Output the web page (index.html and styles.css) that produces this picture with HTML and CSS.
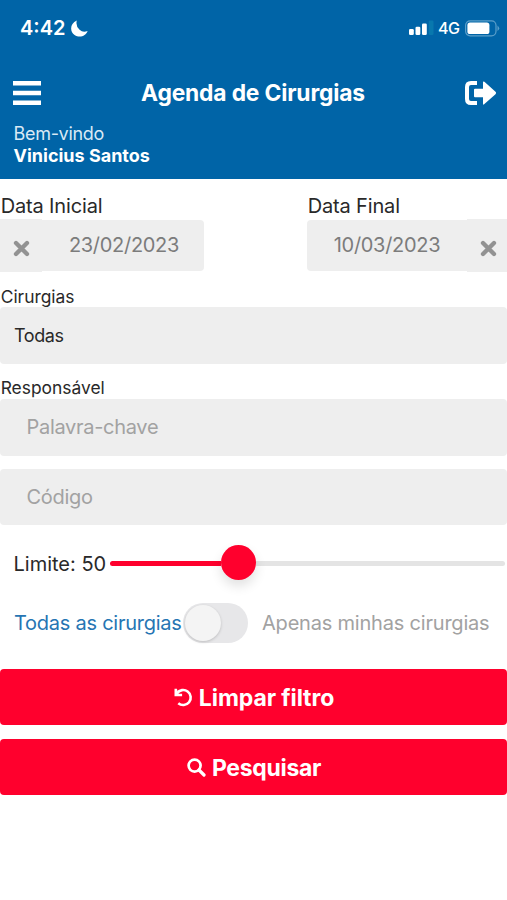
FILE: index.html
```html
<!DOCTYPE html>
<html lang="pt-BR">
<head>
<meta charset="utf-8">
<title>Agenda de Cirurgias</title>
<link rel="stylesheet" href="styles.css">
</head>
<body>
<header class="header">
  <div class="status">
    <span class="clock">4:42</span>
    <svg class="moon" width="17" height="17" viewBox="0 0 17 17"><path d="M5.800.5C-1.200 3.400-1.400 11.600 3.600 14.900 8.300 18 15 16.200 16.600 10.900Q12 12.800 8.600 9.800 4.400 6 5.800.5Z" fill="#fff"/></svg>
    <svg class="signal" width="25" height="16" viewBox="0 0 25 16"><g fill="#fff"><rect x="0" y="9" width="4.800" height="6" rx="1.300"/><rect x="6.500" y="6.700" width="4.800" height="8.300" rx="1.300"/><rect x="13" y="3.400" width="4.800" height="11.600" rx="1.300"/></g><rect x="19.700" y="0.500" width="4.800" height="14.500" rx="1.300" fill="#0878ae"/></svg>
    <span class="network">4G</span>
    <svg class="battery" width="35" height="17" viewBox="0 0 35 17"><rect x=".6" y=".8" width="30.400" height="15" rx="4.500" fill="none" stroke="#5b9fca" stroke-width="1.200"/><rect x="2.400" y="2.600" width="22" height="11.400" rx="2.600" fill="#fff"/><path d="M32.500 5.500q3.400 2.800 0 5.600Z" fill="#5b9fca"/></svg>
  </div>
  <div class="bar">
    <svg class="menu" width="28" height="26" viewBox="0 0 28 26"><path d="M0 1h28v4.600H0zM0 10.700h28v4.600H0zM0 20.400h28V25H0z" fill="#fff"/></svg>
    <h1 class="title">Agenda de Cirurgias</h1>
    <svg class="exit" width="32" height="24" viewBox="0 0 32 24"><path d="M12 2H6Q2 2 2 6v12q0 4 4 4h6" fill="none" stroke="#fff" stroke-width="4" stroke-linejoin="round"/><path d="M10 7.700q-1 0-1 1v6.600q0 1 1 1h8v6.300q0 1.800 1.400.5L30.500 13.200q1.100-1.200 0-2.400L19.400.8Q18-.1 18 1.500v6.200Z" fill="#fff"/></svg>
  </div>
  <div class="welcome">Bem-vindo</div>
  <div class="user">Vinicius Santos</div>
</header>
<main>
  <section class="dates">
    <div class="date start">
      <div class="date-label">Data Inicial</div>
      <div class="date-row">
        <button class="clear" aria-label="Limpar"><svg width="17" height="17" viewBox="0 0 17 17"><path d="M3 3l11 11M14 3L3 14" stroke="#929292" stroke-width="4.300" stroke-linecap="round"/></svg></button>
        <div class="date-value"><span>23/02/2023</span></div>
      </div>
    </div>
    <div class="date end">
      <div class="date-label">Data Final</div>
      <div class="date-row">
        <div class="date-value"><span>10/03/2023</span></div>
        <button class="clear" aria-label="Limpar"><svg width="17" height="17" viewBox="0 0 17 17"><path d="M3 3l11 11M14 3L3 14" stroke="#929292" stroke-width="4.300" stroke-linecap="round"/></svg></button>
      </div>
    </div>
  </section>
  <div class="label">Cirurgias</div>
  <div class="field select">Todas</div>
  <div class="label second">Responsável</div>
  <div class="field">Palavra-chave</div>
  <div class="field code">Código</div>
  <div class="limit">
    <span class="limit-text">Limite: 50</span>
    <div class="track"><div class="fill"></div><div class="thumb"></div><div class="rest"></div></div>
  </div>
  <div class="toggle-row">
    <span class="all">Todas as cirurgias</span>
    <div class="switch"><div class="knob"></div></div>
    <span class="mine">Apenas minhas cirurgias</span>
  </div>
  <button class="action"><svg width="19" height="19" viewBox="0 0 19 19"><path d="M3 5.300A7.500 7.500 0 1 1 4.300 15.200" fill="none" stroke="#fff" stroke-width="2.600"/><path d="M.5.700v7.500h7.600V5.800H4.400L2.900.700Z" fill="#fff"/></svg><span>Limpar filtro</span></button>
  <button class="action search"><svg width="19" height="19" viewBox="0 0 19 19"><circle cx="7.600" cy="7.600" r="6" fill="none" stroke="#fff" stroke-width="2.700"/><path d="M12 12l5 5" stroke="#fff" stroke-width="3.200" stroke-linecap="round"/></svg><span>Pesquisar</span></button>
</main>
</body>
</html>
```
FILE: styles.css
```css
* { box-sizing: border-box; }
body { margin: 0; background: #fff; font-family: Inter, "Liberation Sans", sans-serif; color: #292929; overflow: hidden; }
svg { display: block; flex: none; }
span { white-space: nowrap; }
button { border: 0; padding: 0; font: inherit; }
.header { height: 179px; background: #0064a7; color: #fff; }
.status { display: flex; align-items: center; height: 56px; padding: 0 7px 0 20px; }
.clock { font-size: 20px; font-weight: 600; width: 51px; }
.moon { margin-right: auto; }
.network { font-size: 16px; font-weight: 500; letter-spacing: -.4px; margin: 0 6px 0 4px; width: 21px; }
.bar { display: flex; align-items: center; justify-content: space-between; height: 66px; padding: 8px 10px 0 13px; }
.title { margin: 0; font-size: 22.8px; line-height: 28px; font-weight: 700; letter-spacing: -.16px; white-space: nowrap; }
.welcome, .user { padding-left: 13.5px; font-size: 18px; line-height: 22px; }
.welcome { padding-top: 1px; height: 22px; color: #d9e9f5; letter-spacing: -.3px; }
.user { padding-top: 1px; font-weight: 700; }
.dates { display: flex; justify-content: space-between; height: 108px; padding-top: 14px; }
.date-label { padding-left: .7px; font-size: 20px; line-height: 26px; letter-spacing: -.15px; }
.date-row { display: flex; align-items: center; height: 53px; }
.date.start { width: 204px; }
.date.end { width: 200px; }
.clear { display: flex; align-items: center; justify-content: center; width: 42px; height: 53px; padding-top: 5px; background: #eee; }
.end .clear { width: 40px; padding-left: 2px; }
.date-value { flex: 1; height: 51px; background: #eee; color: #7c7c7c; font-size: 20px; line-height: 51px; letter-spacing: -.3px; text-align: center; }
.start .date-value { border-radius: 0 4px 4px 0; padding-left: 2px; }
.end .date-value { border-radius: 4px 0 0 4px; }
.label { height: 20px; padding-left: .7px; font-size: 17.4px; line-height: 20px; }
.field { height: 57px; padding-left: 26.5px; border-radius: 4px; background: #eee; color: #a2a2a2; font-size: 20px; line-height: 57px; letter-spacing: -.3px; }
.field.select { padding-left: 14px; font-size: 18px; letter-spacing: -.4px; color: #292929; }
.label.second { margin-top: 14px; height: 21px; line-height: 20px; }
.field.code { margin-top: 13px; height: 56px; }
.limit { display: flex; align-items: center; height: 77px; padding: 0 2px 0 13.5px; font-size: 20px; }
.limit-text { width: 96.5px; }
.track { display: flex; align-items: center; flex: 1; }
.fill { width: 111px; height: 5px; border-radius: 3px 0 0 3px; background: #ff002d; }
.thumb { width: 35px; height: 35px; border-radius: 50%; background: #ff002d; box-shadow: 0 6px 12px rgba(0,0,0,.12); z-index: 1; margin-top: -2px; }
.rest { flex: 1; height: 5px; border-radius: 0 3px 3px 0; background: #e4e4e4; }
.toggle-row { display: flex; align-items: center; height: 42px; padding-left: 14px; font-size: 20px; letter-spacing: -.2px; }
.all { width: 169px; color: #2675b3; letter-spacing: -.25px; }
.switch { width: 65px; height: 40px; padding: 2px; border-radius: 20px; background: #e7e7e9; }
.knob { width: 36px; height: 36px; border-radius: 50%; background: #f4f4f4; box-shadow: 0 1px 3px rgba(0,0,0,.18); }
.mine { margin-left: 14px; color: #a2a2a2; }
.action { display: flex; align-items: center; justify-content: center; gap: 6px; width: 100%; height: 56px; margin-bottom: 14px; padding: 1px 0 0 1px; border-radius: 4px; background: #ff002d; color: #fff; font-size: 23px; font-weight: 700; letter-spacing: -.1px; }
.action.search { letter-spacing: -.3px; }
.toggle-row + .action { margin-top: 25px; }
```
